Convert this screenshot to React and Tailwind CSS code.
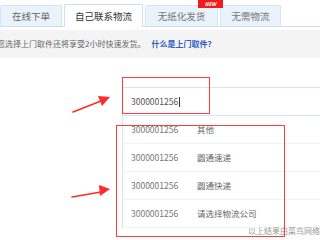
export default function App() {
  const rows = [
    ["3000001256", "其他"],
    ["3000001256", "圆通速递"],
    ["3000001256", "圆通快递"],
    ["3000001256", "请选择物流公司"],
  ];
  return (
    <div
      className="relative w-[320px] h-[240px] overflow-hidden bg-white"
      style={{ fontFamily: '"Noto Sans CJK SC", "Noto Sans", sans-serif' }}
    >
      {/* Tabs */}
      <div className="flex items-end gap-[2px] pt-[4px] h-[27px] border-b border-[#cddff2]">
        <div className="w-[62px] h-[21px] bg-[#eaf2fc] border border-b-0 border-[#d6e4f3] rounded-t-[2px] flex items-center justify-center text-[9.5px] text-[#666]">
          在线下单
        </div>
        <div className="relative -mb-px w-[79px] h-[23px] bg-white border border-b-0 border-[#cddff2] rounded-t-[2px] flex items-center justify-center text-[9.5px] text-[#333]">
          自己联系物流
        </div>
        <div className="relative w-[73px] h-[21px] bg-[#eaf2fc] border border-b-0 border-[#d6e4f3] rounded-t-[2px] flex items-center justify-center text-[9.5px] text-[#777]">
          无纸化发货
          <span className="absolute left-[52px] -top-[6px] w-[25px] h-[8px] bg-[#f01c1c] text-white text-[5px] leading-[8px] italic font-bold text-center">
            NEW
          </span>
        </div>
        <div className="w-[61px] h-[21px] bg-[#eaf2fc] border border-b-0 border-[#d6e4f3] rounded-t-[2px] flex items-center justify-center text-[9.5px] text-[#777]">
          无需物流
        </div>
      </div>

      {/* Notice band */}
      <div className="mt-[3px] h-[28px] bg-[#f4f4f4] flex items-center text-[8px] whitespace-nowrap">
        <span className="-ml-[3px] text-[#666]">您选择上门取件还将享受2小时快速发货。</span>
        <span className="ml-[6px] text-[#2f5fc4] font-bold">什么是上门取件?</span>
      </div>

      {/* Input + dropdown */}
      <div className="mt-[29px] ml-[122px] border-l border-[#d4e6f6]">
        <div className="h-[29px] border-t border-b border-[#d4e6f6] flex items-center pl-[8px] text-[8.5px] text-[#555]">
          3000001256
          <span className="inline-block w-px h-[10px] bg-[#333] ml-px" />
        </div>
        {rows.map(([n, name], i) => (
          <div
            key={i}
            className="h-[28px] border-b border-[#eef3f8] flex items-center text-[8.5px] text-[#777]"
          >
            <span className="w-[74px] pl-[8px]">{n}</span>
            <span className="text-[#666]">{name}</span>
          </div>
        ))}
      </div>

      <div className="absolute left-[248px] top-[225px] text-[8px] text-[#999] whitespace-nowrap">
        以上结果由菜鸟网络提供
      </div>

      {/* Red annotation rectangles */}
      <div className="absolute left-[122px] top-[77px] w-[88px] h-[37px] border-[1.5px] border-[#ff3b3b]" />
      <div className="absolute left-[116px] top-[125px] w-[169px] h-[112px] border-[1.5px] border-[#ff3b3b]" />

      {/* Arrows */}
      <svg className="absolute left-0 top-0" width="320" height="240" viewBox="0 0 320 240">
        <line x1="73" y1="112" x2="101" y2="101" stroke="#ff2a2a" strokeWidth="1.5" strokeLinecap="round" />
        <polygon points="110,97 98,96 102,106" fill="#ff2a2a" />
        <line x1="72" y1="197" x2="101" y2="192" stroke="#ff2a2a" strokeWidth="1.5" strokeLinecap="round" />
        <polygon points="110,189 99,185 100,196" fill="#ff2a2a" />
      </svg>
    </div>
  );
}
